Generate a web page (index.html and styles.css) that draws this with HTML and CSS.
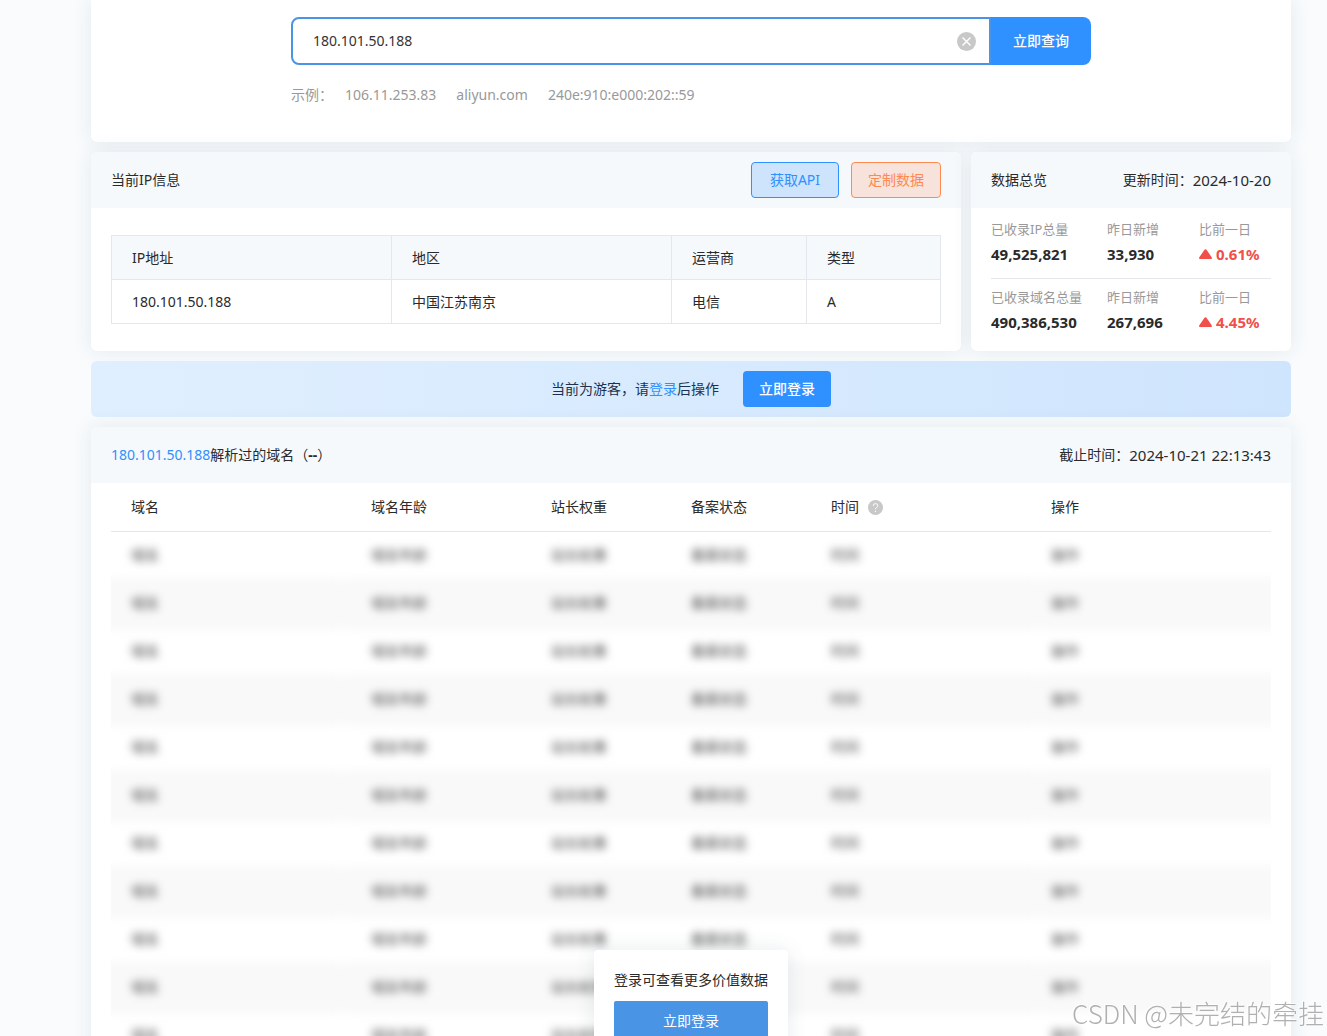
FILE: index.html
```html
<!DOCTYPE html>
<html lang="zh-CN">
<head>
    <meta charset="UTF-8">
    <meta name="viewport" content="width=device-width, initial-scale=1.0">
    <title>IP查询</title>
    <link rel="stylesheet" href="styles.css">
</head>
<body>
    <main class="page">
        <section class="card search-card">
            <div class="search">
                <form class="search-form">
                    <div class="search-field">
                        <input class="search-input" type="text" value="180.101.50.188" aria-label="IP或域名">
                        <button class="clear" type="button" aria-label="清空">
                            <svg width="19" height="19" viewBox="0 0 19 19">
                                <circle cx="9.5" cy="9.5" r="9.5" fill="#c8c8c8"/>
                                <path d="M5.5 5.5l8 8M13.5 5.5l-8 8" stroke="#fff" stroke-width="1.4"/>
                            </svg>
                        </button>
                    </div>
                    <button class="search-btn" type="button">立即查询</button>
                </form>
                <div class="examples">
                    <span class="examples-label">示例：</span>
                    <a href="#">106.11.253.83</a>
                    <a href="#">aliyun.com</a>
                    <a href="#">240e:910:e000:202::59</a>
                </div>
            </div>
        </section>

        <div class="row">
            <section class="card info-card">
                <div class="card-head">
                    <h2>当前IP信息</h2>
                    <div class="head-buttons">
                        <button class="btn-api" type="button">获取API</button>
                        <button class="btn-custom" type="button">定制数据</button>
                    </div>
                </div>
                <div class="info-body">
                    <table class="info-table">
                        <colgroup>
                            <col class="col-ip">
                            <col class="col-area">
                            <col class="col-isp">
                            <col>
                        </colgroup>
                        <thead>
                            <tr><th>IP地址</th><th>地区</th><th>运营商</th><th>类型</th></tr>
                        </thead>
                        <tbody>
                            <tr><td>180.101.50.188</td><td>中国江苏南京</td><td>电信</td><td>A</td></tr>
                        </tbody>
                    </table>
                </div>
            </section>

            <section class="card stats-card">
                <div class="card-head">
                    <h2>数据总览</h2>
                    <p>更新时间：<span class="date">2024-10-20</span></p>
                </div>
                <div class="stats">
                    <div class="stats-row">
                        <div><p>已收录IP总量</p><strong>49,525,821</strong></div>
                        <div><p>昨日新增</p><strong>33,930</strong></div>
                        <div>
                            <p>比前一日</p>
                            <strong class="up">
                                <svg width="13" height="10" viewBox="0 0 13 10"><path d="M5.7.6Q6.5-.3 7.3.6L12.7 8.2Q13.3 10 12 10H1Q-.3 10 .3 8.2Z" fill="#f04f4b"/></svg>
                                0.61%
                            </strong>
                        </div>
                    </div>
                    <div class="stats-row">
                        <div><p>已收录域名总量</p><strong>490,386,530</strong></div>
                        <div><p>昨日新增</p><strong>267,696</strong></div>
                        <div>
                            <p>比前一日</p>
                            <strong class="up">
                                <svg width="13" height="10" viewBox="0 0 13 10"><path d="M5.7.6Q6.5-.3 7.3.6L12.7 8.2Q13.3 10 12 10H1Q-.3 10 .3 8.2Z" fill="#f04f4b"/></svg>
                                4.45%
                            </strong>
                        </div>
                    </div>
                </div>
            </section>
        </div>

        <div class="login-bar">
            <p>当前为游客，请<a href="#">登录</a>后操作</p>
            <button class="login-btn" type="button">立即登录</button>
        </div>

        <section class="card domain-card">
            <div class="card-head">
                <h2><a href="#">180.101.50.188</a>解析过的域名（<b>--</b>）</h2>
                <p>截止时间：<span class="date">2024-10-21 22:13:43</span></p>
            </div>
            <div class="domain-body">
                <table class="domain-table">
                    <colgroup>
                        <col class="col-domain">
                        <col class="col-age">
                        <col class="col-weight">
                        <col class="col-record">
                        <col class="col-time">
                        <col class="col-action">
                    </colgroup>
                    <thead>
                        <tr>
                            <th>域名</th><th>域名年龄</th><th>站长权重</th><th>备案状态</th>
                            <th>
                                <span class="with-help">时间
                                    <svg width="15" height="15" viewBox="0 0 15 15">
                                        <circle cx="7.5" cy="7.5" r="7.5" fill="#c8c8c8"/>
                                        <path d="M5.2 5.9Q5.2 3.6 7.5 3.6T9.8 5.7Q9.8 6.7 8.6 7.4T7.5 9.2" fill="none" stroke="#fff"/>
                                        <circle cx="7.5" cy="11.2" r=".7" fill="#fff"/>
                                    </svg>
                                </span>
                            </th>
                            <th>操作</th>
                        </tr>
                    </thead>
                    <tbody>
                        <tr><td>域名</td><td>域名年龄</td><td>站长权重</td><td>备案状态</td><td>时间</td><td>操作</td></tr>
                        <tr><td>域名</td><td>域名年龄</td><td>站长权重</td><td>备案状态</td><td>时间</td><td>操作</td></tr>
                        <tr><td>域名</td><td>域名年龄</td><td>站长权重</td><td>备案状态</td><td>时间</td><td>操作</td></tr>
                        <tr><td>域名</td><td>域名年龄</td><td>站长权重</td><td>备案状态</td><td>时间</td><td>操作</td></tr>
                        <tr><td>域名</td><td>域名年龄</td><td>站长权重</td><td>备案状态</td><td>时间</td><td>操作</td></tr>
                        <tr><td>域名</td><td>域名年龄</td><td>站长权重</td><td>备案状态</td><td>时间</td><td>操作</td></tr>
                        <tr><td>域名</td><td>域名年龄</td><td>站长权重</td><td>备案状态</td><td>时间</td><td>操作</td></tr>
                        <tr><td>域名</td><td>域名年龄</td><td>站长权重</td><td>备案状态</td><td>时间</td><td>操作</td></tr>
                        <tr><td>域名</td><td>域名年龄</td><td>站长权重</td><td>备案状态</td><td>时间</td><td>操作</td></tr>
                        <tr><td>域名</td><td>域名年龄</td><td>站长权重</td><td>备案状态</td><td>时间</td><td>操作</td></tr>
                        <tr><td>域名</td><td>域名年龄</td><td>站长权重</td><td>备案状态</td><td>时间</td><td>操作</td></tr>
                    </tbody>
                </table>
            </div>
            <div class="login-pop">
                <p>登录可查看更多价值数据</p>
                <button type="button">立即登录</button>
            </div>
        </section>
    </main>
    <div class="watermark">CSDN @未完结的牵挂</div>
</body>
</html>
```

FILE: styles.css
```css
* {
    box-sizing: border-box;
}
body {
    height: 100vh;
    margin: 0;
    overflow: hidden;
    background: #f9fbfd;
    color: #2a2a2a;
    font: 14px/20px "Noto Sans", "Noto Sans CJK SC", sans-serif;
}
h2, p {
    margin: 0;
    font-size: 14px;
    font-weight: normal;
}
a {
    color: #2f90ff;
    text-decoration: none;
}
button, input {
    font: inherit;
}
button {
    padding: 0;
    border: none;
    cursor: pointer;
}
svg {
    display: block;
}
.page {
    display: flex;
    flex-direction: column;
    gap: 10px;
    margin: 0 36px 0 91px;
}
.card {
    background: #fff;
    border-radius: 6px;
    box-shadow: 0 0 20px rgba(50, 90, 110, 0.1);
}
.card-head {
    display: flex;
    justify-content: space-between;
    align-items: center;
    height: 56px;
    padding: 0 20px;
    background: #f5f9fc;
    border-radius: 6px 6px 0 0;
}
.card-head p {
    display: flex;
}
.date {
    font-size: 15px;
}

/* search */
.search-card {
    padding: 17px 20px 37px;
    border-radius: 0 0 6px 6px;
}
.search {
    max-width: 800px;
    margin: 0 auto;
}
.search-form {
    display: flex;
    height: 48px;
}
.search-field {
    display: flex;
    align-items: center;
    flex: 1;
    padding-right: 13px;
    border: 2px solid #4a94e6;
    border-radius: 8px 0 0 8px;
}
.search-input {
    flex: 1;
    padding: 0 20px;
    border: none;
    outline: none;
    background: none;
    color: #333;
}
.clear {
    background: none;
}
.search-btn {
    width: 100px;
    background: #2f90ff;
    border-radius: 0 8px 8px 0;
    color: #fff;
    font-weight: 500;
}
.examples {
    display: flex;
    gap: 20px;
    margin-top: 20px;
    color: #999;
}
.examples-label {
    margin-right: -8px;
}
.examples a {
    color: #999;
}

/* ip info and totals */
.row {
    display: flex;
    gap: 10px;
}
.info-card {
    flex: 1;
    min-width: 0;
}
.head-buttons {
    display: flex;
    gap: 12px;
}
.btn-api, .btn-custom {
    min-width: 88px;
    height: 36px;
    padding: 0 16px;
    border: 1px solid #2f90ff;
    border-radius: 4px;
    background: #cde4fc;
    color: #2f90ff;
}
.btn-custom {
    border-color: #ff8a50;
    background: #f7e2dc;
    color: #ff8a50;
}
.info-body {
    padding: 27px 20px;
}
.info-table, .domain-table {
    width: 100%;
    table-layout: fixed;
    border-collapse: collapse;
}
.info-table th, .info-table td {
    height: 44px;
    padding: 0 20px;
    border: 1px solid #e4e7ed;
    font-weight: normal;
    text-align: left;
}
.info-table th {
    background: #f5f9fc;
}
.col-ip, .col-area {
    width: 280px;
}
.col-isp {
    width: 135px;
}
.stats-card {
    flex: 0 0 320px;
}
.stats {
    padding: 0 20px;
}
.stats-row {
    display: grid;
    grid-template-columns: 116px 92px 1fr;
    padding: 11px 0 14px;
}
.stats-row + .stats-row {
    padding-top: 8px;
    border-top: 1px solid #e4e7ed;
}
.stats-row p {
    color: #999;
    font-size: 13px;
}
.stats-row strong {
    display: flex;
    align-items: center;
    gap: 4px;
    margin-top: 5px;
    font-size: 15px;
}
.stats-row .up {
    color: #f04f4b;
}

/* login bar */
.login-bar {
    display: flex;
    justify-content: center;
    align-items: center;
    gap: 24px;
    height: 56px;
    border-radius: 6px;
    background: linear-gradient(90deg, #e0efff, #cfe5fd);
    color: #1c3350;
}
.login-btn {
    width: 88px;
    height: 36px;
    border-radius: 4px;
    background: #2f90ff;
    color: #fff;
    font-weight: 500;
}

/* domain list */
.domain-card {
    position: relative;
}
.domain-body {
    margin: 0 20px;
    overflow: hidden;
}
.domain-table {
    border-collapse: separate;
    border-spacing: 0;
}
.domain-table th, .domain-table td {
    height: 48px;
    padding: 0 20px 2px;
    font-weight: normal;
    text-align: left;
}
.domain-table th {
    height: 49px;
    padding-bottom: 0;
    border-bottom: 1px solid #e6e6e6;
}
.domain-table tbody {
    color: #444;
    filter: blur(4px);
}
.domain-table tr:nth-child(even) td {
    background: #f9f9f9;
    box-shadow: 0 0 0 2px #f9f9f9;
}
/* run the stripe past both edges so the blur is cut clean */
.domain-table tr:nth-child(even) td:first-child {
    box-shadow: -16px 0 0 2px #f9f9f9;
}
.domain-table tr:nth-child(even) td:last-child {
    box-shadow: 16px 0 0 2px #f9f9f9;
}
.col-domain, .col-action {
    width: 240px;
}
.col-age {
    width: 180px;
}
.col-weight, .col-record {
    width: 140px;
}
.col-time {
    width: 220px;
}
.with-help {
    display: flex;
    align-items: center;
    gap: 9px;
}
.login-pop {
    position: absolute;
    top: 523px;
    left: 50%;
    padding: 20px;
    transform: translateX(-50%);
    border-radius: 4px;
    background: #fff;
    box-shadow: 0 0 20px rgba(50, 90, 110, 0.12);
    white-space: nowrap;
}
.login-pop button {
    width: 100%;
    height: 40px;
    margin-top: 11px;
    border-radius: 2px;
    background: #4a94e6;
    color: #fff;
}
.watermark {
    position: fixed;
    right: 3px;
    bottom: 3px;
    color: #b0b0b0;
    font: 300 26px/40px "Noto Sans CJK SC", sans-serif;
    text-shadow: -1px -1px #fff;
}
```
